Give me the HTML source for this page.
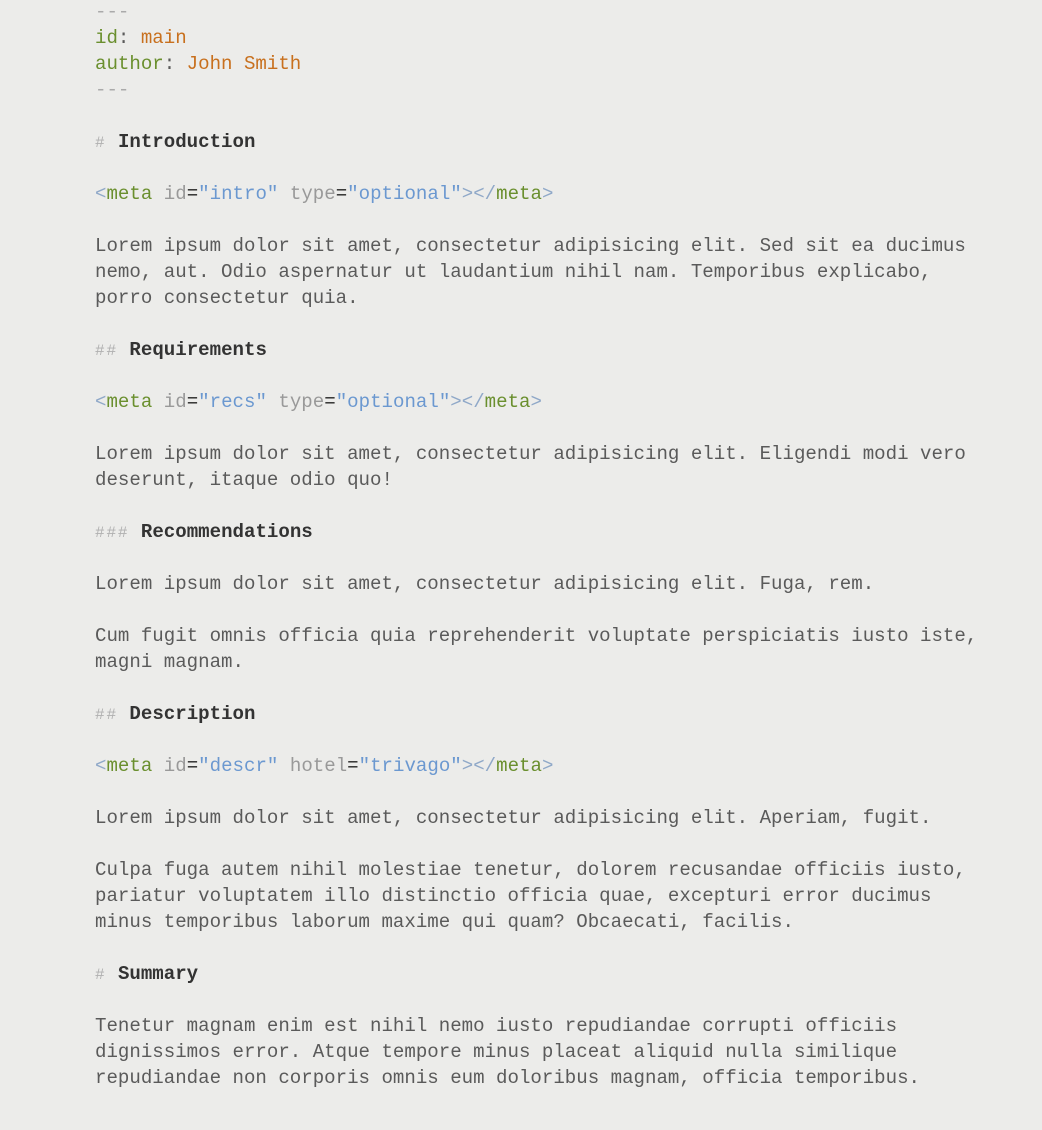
<!DOCTYPE html>
<html><head><meta charset="utf-8"><style>
html,body{margin:0;padding:0;background:#ececea;}
body{width:1042px;height:1130px;overflow:hidden;}
pre{margin:0;padding:0 0 0 95px;font-family:"Liberation Mono",monospace;font-size:19.1px;line-height:26px;color:#5a5a5a;white-space:pre;position:relative;top:-1px;}
.k{color:#6a8f2e}.v{color:#c8701e}.d{color:#aaa}
.h{font-weight:bold;color:#333}
.hs{font-size:16px;line-height:0;letter-spacing:1.86px;color:#b0b0b0;}
.br{color:#8fa8c8}.t{color:#6a8f2e}.a{color:#999}.e{color:#222}.s{color:#6b98d0}
</style></head><body><pre><span class="d">---</span>
<span class="k">id</span>: <span class="v">main</span>
<span class="k">author</span>: <span class="v">John Smith</span>
<span class="d">---</span>

<span class="hs">#</span> <span class="h">Introduction</span>

<span class="br">&lt;</span><span class="t">meta</span> <span class="a">id</span><span class="e">=</span><span class="s">"intro"</span> <span class="a">type</span><span class="e">=</span><span class="s">"optional"</span><span class="br">&gt;&lt;/</span><span class="t">meta</span><span class="br">&gt;</span>

Lorem ipsum dolor sit amet, consectetur adipisicing elit. Sed sit ea ducimus
nemo, aut. Odio aspernatur ut laudantium nihil nam. Temporibus explicabo,
porro consectetur quia.

<span class="hs">##</span> <span class="h">Requirements</span>

<span class="br">&lt;</span><span class="t">meta</span> <span class="a">id</span><span class="e">=</span><span class="s">"recs"</span> <span class="a">type</span><span class="e">=</span><span class="s">"optional"</span><span class="br">&gt;&lt;/</span><span class="t">meta</span><span class="br">&gt;</span>

Lorem ipsum dolor sit amet, consectetur adipisicing elit. Eligendi modi vero
deserunt, itaque odio quo!

<span class="hs">###</span> <span class="h">Recommendations</span>

Lorem ipsum dolor sit amet, consectetur adipisicing elit. Fuga, rem.

Cum fugit omnis officia quia reprehenderit voluptate perspiciatis iusto iste,
magni magnam.

<span class="hs">##</span> <span class="h">Description</span>

<span class="br">&lt;</span><span class="t">meta</span> <span class="a">id</span><span class="e">=</span><span class="s">"descr"</span> <span class="a">hotel</span><span class="e">=</span><span class="s">"trivago"</span><span class="br">&gt;&lt;/</span><span class="t">meta</span><span class="br">&gt;</span>

Lorem ipsum dolor sit amet, consectetur adipisicing elit. Aperiam, fugit.

Culpa fuga autem nihil molestiae tenetur, dolorem recusandae officiis iusto,
pariatur voluptatem illo distinctio officia quae, excepturi error ducimus
minus temporibus laborum maxime qui quam? Obcaecati, facilis.

<span class="hs">#</span> <span class="h">Summary</span>

Tenetur magnam enim est nihil nemo iusto repudiandae corrupti officiis
dignissimos error. Atque tempore minus placeat aliquid nulla similique
repudiandae non corporis omnis eum doloribus magnam, officia temporibus.
</pre></body></html>
